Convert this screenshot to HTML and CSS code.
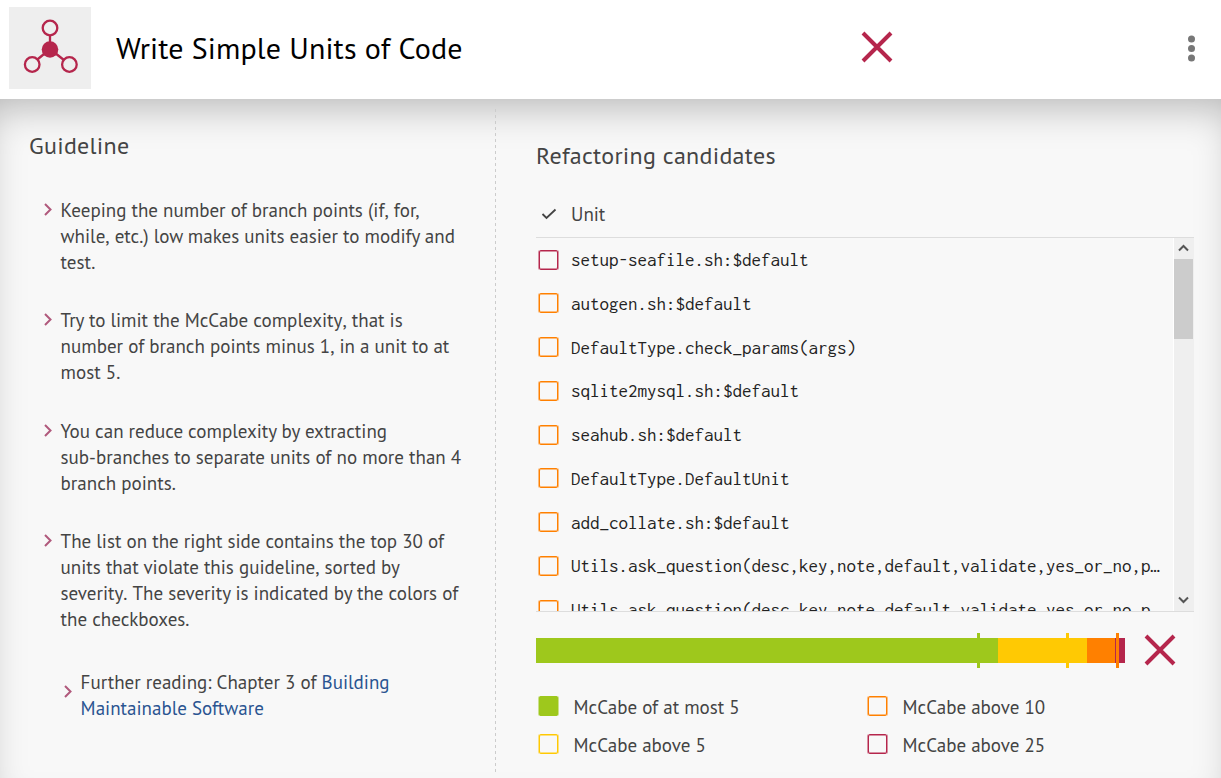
FILE: index.html
```html
<!DOCTYPE html>
<html lang="en">
<head>
<meta charset="utf-8">
<title>Write Simple Units of Code</title>
<link rel="stylesheet" href="styles.css">
</head>
<body>
<header class="header">
  <div class="badge">
    <svg width="82" height="82" viewBox="0 0 82 82" fill="none" stroke="#b5264c" stroke-width="2.3">
      <path d="M41 28v14M41 42L23 57M41 42L60 57"/>
      <circle cx="41" cy="42.5" r="8.3" fill="#b5264c" stroke="none"/>
      <circle cx="41" cy="21" r="7.3" fill="#eee"/>
      <circle cx="23.2" cy="57.5" r="7.3" fill="#eee"/>
      <circle cx="60.4" cy="57.5" r="7.3" fill="#eee"/>
    </svg>
  </div>
  <h1 class="title"><span>Write Simple Units of Code</span></h1>
  <svg class="cross" width="32" height="32" viewBox="0 0 32 32"><path d="M2 2L30 30M30 2L2 30"/></svg>
  <svg class="menu" width="8" height="28" viewBox="0 0 8 28"><circle cx="4.5" cy="5" r="3.5"/><circle cx="4.5" cy="14.5" r="3.5"/><circle cx="4.5" cy="24" r="3.5"/></svg>
</header>
<main class="content">
  <section class="guideline">
    <h2 class="heading">Guideline</h2>
    <ul class="tips">
      <li class="tip"><svg class="chevron" viewBox="0 0 8 13"><path d="M1 1L6.5 6.5L1 12"/></svg><p>Keeping the number of branch points (if<span class="even">, </span>for,<br>while<span class="even">, </span>etc.<span class="even">) </span>low makes units easier to modify and<br>test.</p></li>
      <li class="tip"><svg class="chevron" viewBox="0 0 8 13"><path d="M1 1L6.5 6.5L1 12"/></svg><p>Try to limit the McCabe complexity<span class="even">, </span>that is<br>number of branch points minus 1<span class="even">, </span>in a unit to at<br>most 5.</p></li>
      <li class="tip"><svg class="chevron" viewBox="0 0 8 13"><path d="M1 1L6.5 6.5L1 12"/></svg><p>You can reduce complexity by extracting<br>sub-branches to separate units of no more than 4<br>branch points.</p></li>
      <li class="tip"><svg class="chevron" viewBox="0 0 8 13"><path d="M1 1L6.5 6.5L1 12"/></svg><p>The list on the right side contains the top 30 of<br>units that violate this guideline<span class="even">, </span>sorted by<br>severity<span class="even">. </span>The severity is indicated by the colors of<br>the checkboxes.</p></li>
      <li class="tip reading"><svg class="chevron" viewBox="0 0 8 13"><path d="M1 1L6.5 6.5L1 12"/></svg><p>Further reading: Chapter 3 of <a>Building<br>Maintainable Software</a></p></li>
    </ul>
  </section>
  <section class="candidates">
    <h2 class="heading">Refactoring candidates</h2>
    <div class="thead">
      <svg width="16" height="12" viewBox="0 0 16 12"><path d="M1.5 6L5.5 10L14.5 1.5"/></svg><span>Unit</span>
    </div>
    <div class="table">
      <ul class="rows">
        <li class="row"><i class="box red"></i>setup-seafile.sh:$default</li>
        <li class="row"><i class="box orange"></i>autogen.sh:$default</li>
        <li class="row"><i class="box orange"></i>DefaultType.check_params(args)</li>
        <li class="row"><i class="box orange"></i>sqlite2mysql.sh:$default</li>
        <li class="row"><i class="box orange"></i>seahub.sh:$default</li>
        <li class="row"><i class="box orange"></i>DefaultType.DefaultUnit</li>
        <li class="row"><i class="box orange"></i>add_collate.sh:$default</li>
        <li class="row"><i class="box orange"></i>Utils.ask_question(desc,key,note,default,validate,yes_or_no,p…</li>
        <li class="row"><i class="box orange"></i>Utils.ask_question(desc,key,note,default,validate,yes_or_no,p…</li>
      </ul>
      <div class="scrollbar">
        <svg width="19" height="21" viewBox="0 0 19 21"><path d="M5 12.5L9.5 8L14 12.5"/></svg>
        <div class="thumb"></div>
        <svg width="19" height="21" viewBox="0 0 19 21"><path d="M5 7.5L9.5 12L14 7.5"/></svg>
      </div>
    </div>
    <div class="rating">
      <svg class="bar" width="589" height="35" viewBox="0 0 589 35" shape-rendering="crispEdges">
        <rect x="0" y="5" width="462" height="25" fill="#9ec81c"/>
        <rect x="462" y="5" width="89" height="25" fill="#ffc903"/>
        <rect x="551" y="5" width="28" height="25" fill="#ff8000"/>
        <rect x="579" y="5" width="10" height="25" fill="#b5264c"/>
        <rect x="441" y="0" width="3" height="35" fill="#9ec81c"/>
        <rect x="530" y="0" width="3" height="35" fill="#ffc903"/>
        <rect x="580" y="0" width="3" height="35" fill="#ff8000"/>
      </svg>
      <svg class="cross" width="32" height="32" viewBox="0 0 32 32"><path d="M2 2L30 30M30 2L2 30"/></svg>
    </div>
    <div class="legend">
      <div class="key"><i class="box green"></i><span>McCabe of at most 5</span></div>
      <div class="key"><i class="box orange"></i><span>McCabe above 10</span></div>
      <div class="key"><i class="box yellow"></i><span>McCabe above 5</span></div>
      <div class="key"><i class="box red"></i><span>McCabe above 25</span></div>
    </div>
  </section>
</main>
</body>
</html>
```

FILE: styles.css
```css
* { box-sizing: border-box; }
body, h1, h2, p, ul { margin: 0; padding: 0; }
body {
  width: 1221px;
  height: 778px;
  overflow: hidden;
  background: #fff;
  color: #444;
  font: 19px/26px "PT Sans", "Noto Sans", sans-serif;
}
ul { list-style: none; }
svg { display: block; flex: none; }
.header { display: flex; align-items: center; height: 99px; padding: 0 26px 3px 9px; }
.badge { width: 82px; height: 82px; background: #eee; }
.title { flex: none; width: 745px; padding-left: 25px; color: #000; font-size: 30px; font-weight: 400; line-height: 40px; letter-spacing: .13px; white-space: nowrap; }
.cross { fill: none; stroke: #b5264c; stroke-width: 4; }
.title + .cross { margin: 0 auto 2px 25px; }
.menu { fill: #777; }
.content {
  display: flex;
  height: 679px;
  background: #f8f8f8;
  box-shadow: inset 0 22px 40px -15px rgba(0, 0, 0, .28);
}
.guideline {
  width: 496px;
  height: 666px;
  margin-top: 10px;
  padding: 21px 0 0 29px;
  background: repeating-linear-gradient(#ccc 0 3px, transparent 3px 6px) right / 1px 100% no-repeat;
}
.heading { font-size: 24px; font-weight: 400; line-height: 32px; letter-spacing: .28px; white-space: nowrap; }
.tips { padding: 35px 0 0 15px; letter-spacing: .01px; }
.tip { display: flex; gap: 8.6px; margin-bottom: 32.4px; white-space: nowrap; }
.even { font-kerning: none; }
.chevron { width: 8px; height: 13px; margin-top: 6px; fill: none; stroke: #b0597c; stroke-width: 2; }
.reading { margin-top: 37px; padding-left: 20px; }
.reading .chevron { margin-top: 16px; }
a { color: #2a5491; }
.candidates { width: 658px; margin-left: 40px; padding-top: 41px; }
.thead { display: flex; align-items: center; gap: 14px; height: 48px; margin-top: 18px; padding: 0 0 0 5px; border-bottom: 1px solid #ddd; }
.thead svg { fill: none; stroke: #444; stroke-width: 1.8; }
.table { display: flex; height: 374px; border-bottom: 1px solid #ddd; }
.rows { width: 637px; height: 373px; overflow: hidden; }
.row { display: flex; align-items: center; gap: 13px; height: 43.75px; padding: .5px 0 0 3px; color: #222; font: 19px/24px Inconsolata, "DejaVu Sans Mono", monospace; white-space: nowrap; }
.box {
  --edge: color-mix(in srgb, currentColor 50%, transparent);
  flex: none;
  width: 19px;
  height: 20px;
  border: 1px solid;
  border-radius: 2px;
  box-shadow: -1px 0 var(--edge), 1px 0 var(--edge), inset 0 1px var(--edge), inset 0 -1px var(--edge);
}
.row .box { margin-bottom: .9px; }
.red { color: #b5264c; }
.orange { color: #ff8000; }
.yellow { color: #ffc903; }
.green { color: #9ec81c; background: #9ec81c; }
.scrollbar { display: flex; flex-direction: column; width: 21px; padding-right: 1px; border-left: 1px solid #fff; background: #efefef; }
.scrollbar svg { fill: none; stroke: #555; stroke-width: 2; }
.thumb { height: 80px; margin-bottom: auto; background: #ccc; }
.rating { display: flex; align-items: center; gap: 19px; margin-top: 21px; }
.rating .cross { margin-bottom: 1px; }
.legend { display: grid; grid-template-columns: 329px 1fr; grid-auto-rows: 38px; margin-top: 20px; }
.key { display: flex; align-items: center; gap: 15.6px; padding-left: 3px; white-space: nowrap; }
.key .box { margin-bottom: 2px; }
```
